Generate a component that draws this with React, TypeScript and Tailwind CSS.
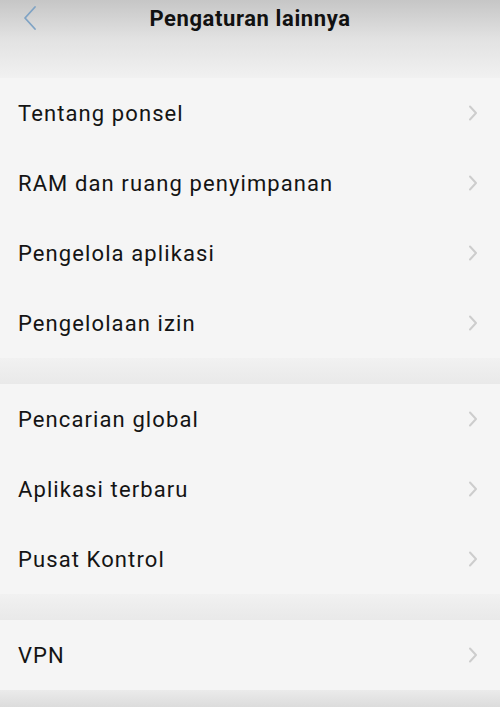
import React from 'react';

const groups: string[][] = [
  ['Tentang ponsel', 'RAM dan ruang penyimpanan', 'Pengelola aplikasi', 'Pengelolaan izin'],
  ['Pencarian global', 'Aplikasi terbaru', 'Pusat Kontrol'],
  ['VPN'],
];

const Chevron = () => (
  <svg width="10" height="16" viewBox="0 0 10 16" fill="none">
    <path d="M2 1.5 L8 8 L2 14.5" stroke="#cdcdcd" strokeWidth="2" strokeLinecap="round" strokeLinejoin="round" />
  </svg>
);

const App: React.FC = () => {
  return (
    <div
      className="w-[500px] h-[707px] overflow-hidden flex flex-col bg-[#e6e6e6]"
      style={{ fontFamily: 'Roboto, "Noto Sans", sans-serif' }}
    >
      {/* Header */}
      <div className="h-[78px] shrink-0 bg-gradient-to-b from-[#c6c6c6] via-[#e2e2e2] to-[#f1f1f1]">
        <div className="relative h-[36px] flex items-center justify-center">
          <svg className="absolute left-[22px] top-[5px]" width="16" height="26" viewBox="0 0 16 26" fill="none">
            <path d="M13 2 L3 13 L13 24" stroke="#7fa3c4" strokeWidth="1.8" strokeLinecap="round" strokeLinejoin="round" />
          </svg>
          <span className="text-[22px] font-bold tracking-[0.6px] text-[#111]">Pengaturan lainnya</span>
        </div>
      </div>

      {groups.map((items, gi) => (
        <div key={gi} className="flex flex-col">
          {gi > 0 && <div className="h-[26px] bg-gradient-to-b from-[#f1f1f1] to-[#e9e9e9]" />}
          {items.map((label) => (
            <div key={label} className="h-[70px] flex items-center justify-between pl-[18px] pr-[22px] bg-[#f5f5f5]">
              <span className="text-[22px] tracking-[1.1px] text-[#141414]">{label}</span>
              <Chevron />
            </div>
          ))}
        </div>
      ))}

      <div className="flex-1 bg-gradient-to-b from-[#ebebeb] to-[#dcdcdc]" />
    </div>
  );
};

export default App;
